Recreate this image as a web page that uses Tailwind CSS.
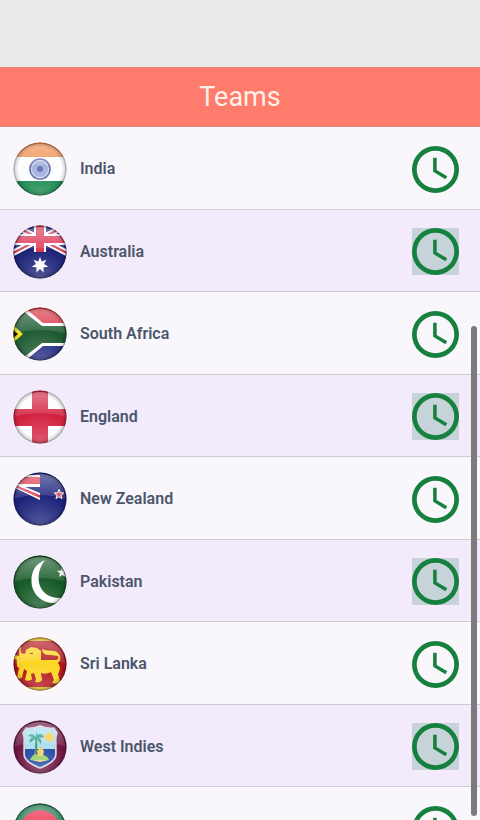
<!DOCTYPE html>
<html lang="en">
<head>
    <meta charset="UTF-8">
    <meta name="viewport" content="width=device-width, initial-scale=1.0">
    <script src="https://cdn.jsdelivr.net/npm/@tailwindcss/browser@4"></script>
    <title>Teams</title>
</head>
<body class="relative flex flex-col h-screen overflow-hidden bg-[#f9f7fc] font-['Roboto',sans-serif]">
    <!-- shared icons -->
    <svg class="absolute w-0 h-0" aria-hidden="true">
        <defs>
            <clipPath id="round"><circle cx="27" cy="27" r="26.5"/></clipPath>
            <linearGradient id="shine" x1="0" y1="0" x2="0" y2="1">
                <stop offset="0" stop-color="#fff" stop-opacity=".38"/>
                <stop offset="1" stop-color="#fff" stop-opacity=".1"/>
            </linearGradient>
            <radialGradient id="edge">
                <stop offset=".82" stop-color="#000" stop-opacity="0"/>
                <stop offset=".94" stop-color="#000" stop-opacity=".15"/>
                <stop offset="1" stop-color="#000" stop-opacity=".45"/>
            </radialGradient>
            <radialGradient id="glow" cx=".5" cy="1" r=".6">
                <stop offset="0" stop-color="#fff" stop-opacity=".25"/>
                <stop offset="1" stop-color="#fff" stop-opacity="0"/>
            </radialGradient>
        </defs>
        <symbol id="gloss" viewBox="0 0 54 54">
            <path d="M2 27C2 11 13 2 27 2s25 9 25 25c-9-5-41-5-50 0z" fill="url(#shine)"/>
            <circle cx="27" cy="27" r="26.5" fill="url(#glow)"/>
            <circle cx="27" cy="27" r="26.5" fill="url(#edge)"/>
        </symbol>
        <symbol id="clock" viewBox="2 2 20 20">
            <path fill="#16803f" d="M12 2a10 10 0 1 0 0 20 10 10 0 0 0 0-20zm0 18a8 8 0 1 1 0-16 8 8 0 0 1 0 16z"/>
            <path fill="#16803f" d="M12.5 7H11v6l5.2 3.2.8-1.3-4.5-2.7z"/>
        </symbol>
    </svg>

    <div class="h-[67px] shrink-0 bg-[#eaeaea]"></div>
    <header class="h-[60px] shrink-0 flex items-center justify-center bg-[#ff7b6b] border-y border-[#e8827c]">
        <h1 class="text-[27px] leading-8 text-[#fff1e8]">Teams</h1>
    </header>

    <ul class="flex-1 overflow-hidden text-base font-semibold text-[#4b566b]">
        <li class="flex items-center h-[83px] pt-0.5 pl-[13px] pr-[21px] border-b border-[#cfcbd5] bg-[#f9f7fc]">
            <svg class="size-[54px]" viewBox="0 0 54 54" aria-hidden="true">
                <g clip-path="url(#round)">
                    <path fill="#fdfdfd" d="M0 0h54v54H0z"/>
                    <path fill="#ef8d4c" d="M0 0h54v15H0z"/>
                    <path fill="#12854a" d="M0 39h54v15H0z"/>
                    <circle cx="27" cy="27" r="10" fill="#d4dcf2" stroke="#5d69a8" stroke-width="1.6"/>
                    <circle cx="27" cy="27" r="5" fill="none" stroke="#a3b0dc" stroke-width="6"/>
                    <circle cx="27" cy="27" r="3" fill="#6374b6"/>
                </g>
                <use href="#gloss"/>
            </svg>
            <span class="ml-[13px] flex-1">India</span>
            <button class="size-[47px]" aria-label="India schedule"><svg class="size-full"><use href="#clock"/></svg></button>
        </li>
        <li class="flex items-center h-[82px] pt-0.5 pl-[13px] pr-[21px] border-b border-[#cfcbd5] bg-[#f3ebfb]">
            <svg class="size-[54px]" viewBox="0 0 54 54" aria-hidden="true">
                <g clip-path="url(#round)">
                    <path fill="#1c2178" d="M0 0h54v54H0z"/>
                    <path stroke="#fff" stroke-width="6" d="M0 28 54 0M0 0l54 28"/>
                    <path stroke="#d8324a" stroke-width="2" d="M0 28 54 0M0 0l54 28"/>
                    <path fill="#fff" d="M0 9h54v11H0zM21 0h12v27H21z"/>
                    <path fill="#dc3350" d="M0 11h54v7H0zM23 0h8v27h-8z"/>
                    <path fill="#fff" d="m27 32 1.800 4.600 4.600-1.800-2.400 4.300 4.200 2.700-4.900.7.400 4.900-3.700-3.300-3.700 3.300.4-4.900-4.900-.7 4.200-2.700-2.400-4.300 4.600 1.800z"/>
                </g>
                <use href="#gloss"/>
            </svg>
            <span class="ml-[13px] flex-1">Australia</span>
            <button class="size-[47px] bg-[#c6d3d8]" aria-label="Australia schedule"><svg class="size-full"><use href="#clock"/></svg></button>
        </li>
        <li class="flex items-center h-[83px] pt-0.5 pl-[13px] pr-[21px] border-b border-[#cfcbd5] bg-[#f9f7fc]">
            <svg class="size-[54px]" viewBox="0 0 54 54" aria-hidden="true">
                <g clip-path="url(#round)">
                    <path fill="#d8303e" d="M0 0h54v27H0z"/>
                    <path fill="#20277f" d="M0 27h54v27H0z"/>
                    <path fill="#fff" d="M0-4h6l24 20h24v23H30L6 59H0z"/>
                    <path fill="#1d5a31" d="M0 0h5l24 19h25v17H29L5 55H0z"/>
                    <path fill="#f3e51d" d="m-1 17 11 10-11 10z"/>
                    <path fill="#161510" d="m-1 22 6 5-6 5z"/>
                </g>
                <use href="#gloss"/>
            </svg>
            <span class="ml-[13px] flex-1">South Africa</span>
            <button class="size-[47px]" aria-label="South Africa schedule"><svg class="size-full"><use href="#clock"/></svg></button>
        </li>
        <li class="flex items-center h-[82px] pt-0.5 pl-[13px] pr-[21px] border-b border-[#cfcbd5] bg-[#f3ebfb]">
            <svg class="size-[54px]" viewBox="0 0 54 54" aria-hidden="true">
                <g clip-path="url(#round)">
                    <path fill="#fdfdfd" d="M0 0h54v54H0z"/>
                    <path fill="#d4213f" d="M19 0h16v54H19z"/>
                    <path fill="#d4213f" d="M0 19h54v17H0z"/>
                </g>
                <use href="#gloss"/>
            </svg>
            <span class="ml-[13px] flex-1">England</span>
            <button class="size-[47px] bg-[#c6d3d8]" aria-label="England schedule"><svg class="size-full"><use href="#clock"/></svg></button>
        </li>
        <li class="flex items-center h-[83px] pt-0.5 pl-[13px] pr-[21px] border-b border-[#cfcbd5] bg-[#f9f7fc]">
            <svg class="size-[54px]" viewBox="0 0 54 54" aria-hidden="true">
                <g clip-path="url(#round)">
                    <path fill="#1d237b" d="M0 0h54v54H0z"/>
                    <path fill="#fff" d="M0 3h27v12H0zM0 10l27 11v7L0 15z"/>
                    <path fill="#dc3a50" d="M0 5h27v7H0zM0 12l27 11v3L0 14z"/>
                    <path fill="#dc3a50" stroke="#fff" d="m46 17.500 1.300 3.300 3.500.2-2.700 2.200.9 3.400-3-1.900-3 1.900.9-3.400-2.700-2.200 3.500-.2z"/>
                </g>
                <use href="#gloss"/>
            </svg>
            <span class="ml-[13px] flex-1">New Zealand</span>
            <button class="size-[47px]" aria-label="New Zealand schedule"><svg class="size-full"><use href="#clock"/></svg></button>
        </li>
        <li class="flex items-center h-[82px] pt-0.5 pl-[13px] pr-[21px] border-b border-[#cfcbd5] bg-[#f3ebfb]">
            <svg class="size-[54px]" viewBox="0 0 54 54" aria-hidden="true">
                <g clip-path="url(#round)">
                    <path fill="#155a26" d="M0 0h54v54H0z"/>
                    <path fill="#fff" d="M32 5C22 9 18 17 18.500 27 19 39 29 48 40 48c5 0 9-2 13-6-11 3-22-1-26-11-3-9-1-18 5-26z"/>
                    <path fill="#fff" d="m49 12 1 4 4-1-3 3 2 4-4-2-3 2 1-4-3-2 4-.5z"/>
                </g>
                <use href="#gloss"/>
            </svg>
            <span class="ml-[13px] flex-1">Pakistan</span>
            <button class="size-[47px] bg-[#c6d3d8]" aria-label="Pakistan schedule"><svg class="size-full"><use href="#clock"/></svg></button>
        </li>
        <li class="flex items-center h-[83px] pt-0.5 pl-[13px] pr-[21px] border-b border-[#cfcbd5] bg-[#f9f7fc]">
            <svg class="size-[54px]" viewBox="0 0 54 54" aria-hidden="true">
                <g clip-path="url(#round)">
                    <path fill="#b3141c" d="M0 0h54v54H0z"/>
                    <path fill="#f2c928" d="M0 0h54v4H0zM0 50h54v4H0z"/>
                    <!-- lion with sword -->
                    <path fill="#fbd51f" d="m12 17 1-4 5-3 6 1 4 3v9h14c3 0 4-2 3-4l-8-1c-4 0-8-1-8-6 5 3 12 0 16 4 3 3 3 7 0 10 3 4 2 8 0 11l2 7c0 2-4 3-8 2l2-3-3-8c-4 2-7 2-10 1l1 7c-1 2-4 3-7 2l1-3-2-6-3 1 1 5c-1 2-5 2-7 1l2-9-3-2-2 8c-1 2-4 2-5 0l2-9c-2-2-3-5-2-8l-4-2 2-3 4 1 2-3z"/>
                    <path stroke="#f7c62a" stroke-width="2" d="M7 10v30M4 29h6"/>
                    <path fill="#8f2817" d="M17 16h3v1h-3z"/>
                </g>
                <use href="#gloss"/>
            </svg>
            <span class="ml-[13px] flex-1">Sri Lanka</span>
            <button class="size-[47px]" aria-label="Sri Lanka schedule"><svg class="size-full"><use href="#clock"/></svg></button>
        </li>
        <li class="flex items-center h-[82px] pt-0.5 pl-[13px] pr-[21px] border-b border-[#cfcbd5] bg-[#f3ebfb]">
            <svg class="size-[54px]" viewBox="0 0 54 54" aria-hidden="true">
                <g clip-path="url(#round)">
                    <path fill="#701743" d="M0 0h54v54H0z"/>
                    <path fill="#a9e0f1" stroke="#dfd2df" stroke-width="1.500" d="M13 8c5 1 9 0 14-2 5 2 9 3 14 2l3 5c-2 4-1 8-1 12v9c0 6-5 10-16 14-11-4-16-8-16-14v-9c0-4 1-8-1-12z"/>
                    <path fill="#2449a4" d="M12 29h30v5c0 5-5 9-15 13-10-4-15-8-15-13z"/>
                    <circle cx="36" cy="17" r="4" fill="#f5cf4d"/>
                    <path stroke="#f5cf4d" d="M36 11v12M30 17h12M32 13l8 8M40 13l-8 8"/>
                    <path fill="none" stroke="#4a9274" stroke-width="2" d="M23 17c1 8 0 13-1 18"/>
                    <path fill="#35a58d" d="M23 17c-2-3-6-4-8-1l5 1c-3 1-4 3-3 6l6-5 5 6c1-3 0-5-2-6l5-1c-1-3-4-4-7-2l-1-4z"/>
                    <path fill="#9bce68" d="M17 40c3-7 8-7 11-4 4-2 7 1 8 4z"/>
                    <path fill="#f2cd67" d="m28 26 3 5-1 5h-5l-1-5z"/>
                    <path fill="#e5d986" d="M18 40h18l-9 2z"/>
                </g>
                <use href="#gloss"/>
            </svg>
            <span class="ml-[13px] flex-1">West Indies</span>
            <button class="size-[47px] bg-[#c6d3d8]" aria-label="West Indies schedule"><svg class="size-full"><use href="#clock"/></svg></button>
        </li>
        <li class="flex items-center justify-between h-[83px] pt-0.5 pl-[13px] pr-[21px] bg-[#f9f7fc]">
            <svg class="size-[54px]" viewBox="0 0 54 54" aria-hidden="true">
                <g clip-path="url(#round)">
                    <path fill="#16784a" d="M0 0h54v54H0z"/>
                    <circle cx="27" cy="27" r="20" fill="#ec2c4b"/>
                </g>
                <use href="#gloss"/>
            </svg>
            <button class="size-[47px]" aria-label="Schedule"><svg class="size-full"><use href="#clock"/></svg></button>
        </li>
    </ul>

    <!-- scroll thumb -->
    <div class="absolute right-[3px] bottom-1 w-1.5 h-[490px] rounded-full bg-[#7b7a7d]"></div>
</body>
</html>
